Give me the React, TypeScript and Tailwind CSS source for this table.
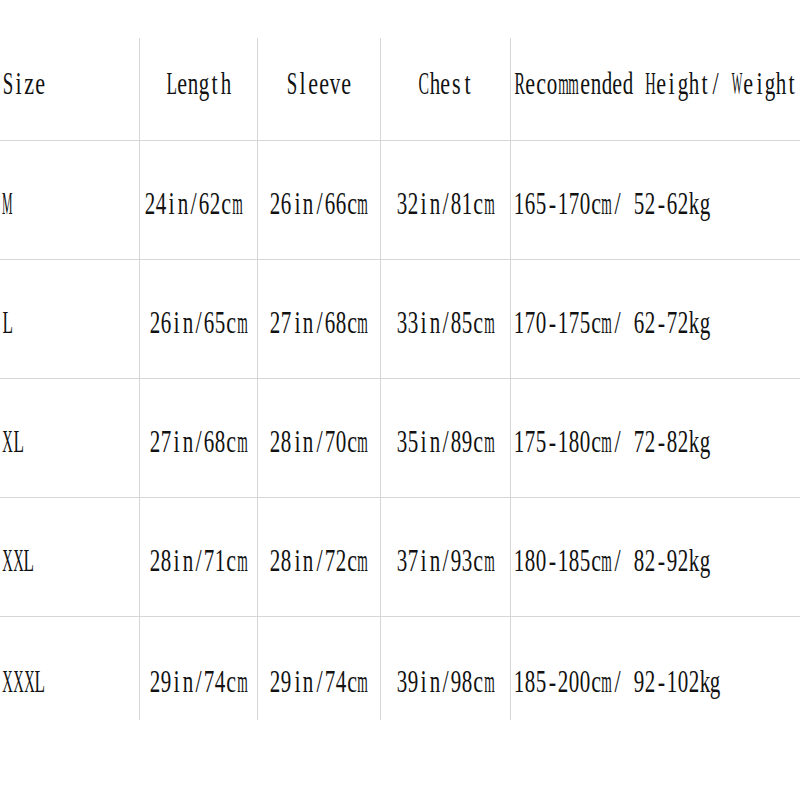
import React from 'react';

const font = "font-['Liberation_Serif',serif]";

// advance widths of Liberation Serif (per 1000 em), used to squeeze each glyph into a half-width cell
const glyphWidth: Record<string, number> = {
  S: 556, i: 278, z: 444, e: 444, L: 611, n: 500, g: 500, t: 278, h: 500, l: 278,
  v: 500, C: 667, s: 389, R: 667, c: 444, o: 500, m: 778, d: 500, H: 722, '/': 278,
  W: 944, M: 889, X: 722, '-': 333, k: 500
};

const CELL = 10.9;
const SIZE = 32;

const rows = [
  { size: 'M', length: '24in/62cm', sleeve: '26in/66cm', chest: '32in/81cm', rec: '165-170cm/ 52-62kg', shift: true },
  { size: 'L', length: '26in/65cm', sleeve: '27in/68cm', chest: '33in/85cm', rec: '170-175cm/ 62-72kg' },
  { size: 'XL', length: '27in/68cm', sleeve: '28in/70cm', chest: '35in/89cm', rec: '175-180cm/ 72-82kg' },
  { size: 'XXL', length: '28in/71cm', sleeve: '28in/72cm', chest: '37in/93cm', rec: '180-185cm/ 82-92kg' },
  { size: 'XXXL', length: '29in/74cm', sleeve: '29in/74cm', chest: '39in/98cm', rec: '185-200cm/ 92-102kg' }
];

// half-width serif text: every character sits in a fixed narrow cell
const Txt = ({ children }: { children: string }) => (
  <span className="inline-flex whitespace-pre text-[32px] leading-none text-[#111]">
    {children.split('').map((ch, i) => {
      const w = ((glyphWidth[ch] ?? 500) / 1000) * SIZE;
      const s = Math.min(0.69, (CELL - 0.4) / w);
      return (
        <span key={i} className="inline-flex justify-center w-[10.9px] shrink-0">
          {ch === ' ' ? null : (
            <span className="inline-block" style={{ transform: `scaleX(${s})` }}>
              {ch}
            </span>
          )}
        </span>
      );
    })}
  </span>
);

const Row = ({
  cells,
  height,
  pad,
  last,
  shift
}: {
  cells: string[];
  height: string;
  pad: string;
  last?: boolean;
  shift?: boolean;
}) => (
  <div className={`flex ${height} ${last ? '' : 'border-b border-[#d6d6d6]'}`}>
    <div className={`w-[140px] shrink-0 border-r border-[#d6d6d6] pl-[2px] ${pad}`}>
      <Txt>{cells[0]}</Txt>
    </div>
    <div
      className={`w-[118px] shrink-0 border-r border-[#d6d6d6] flex justify-center ${pad} ${
        shift ? 'pr-[10px]' : ''
      }`}
    >
      <Txt>{cells[1]}</Txt>
    </div>
    <div className={`w-[123px] shrink-0 border-r border-[#d6d6d6] flex justify-center ${pad}`}>
      <Txt>{cells[2]}</Txt>
    </div>
    <div className={`w-[130px] shrink-0 border-r border-[#d6d6d6] flex justify-center ${pad}`}>
      <Txt>{cells[3]}</Txt>
    </div>
    <div className={`flex-1 min-w-0 pl-[3px] ${pad} overflow-hidden`}>
      <Txt>{cells[4]}</Txt>
    </div>
  </div>
);

export default function App() {
  return (
    <div className={`w-[800px] h-[800px] bg-white overflow-hidden pt-[38px] ${font}`}>
      <Row
        cells={['Size', 'Length', 'Sleeve', 'Chest', 'Recommended Height/ Weight']}
        height="h-[103px]"
        pad="pt-[29px]"
      />
      {rows.map((r, i) => (
        <Row
          key={r.size}
          cells={[r.size, r.length, r.sleeve, r.chest, r.rec]}
          height={i === rows.length - 1 ? 'h-[103px]' : 'h-[119px]'}
          pad={i === rows.length - 1 ? 'pt-[48px]' : 'pt-[46px]'}
          last={i === rows.length - 1}
          shift={r.shift}
        />
      ))}
    </div>
  );
}
